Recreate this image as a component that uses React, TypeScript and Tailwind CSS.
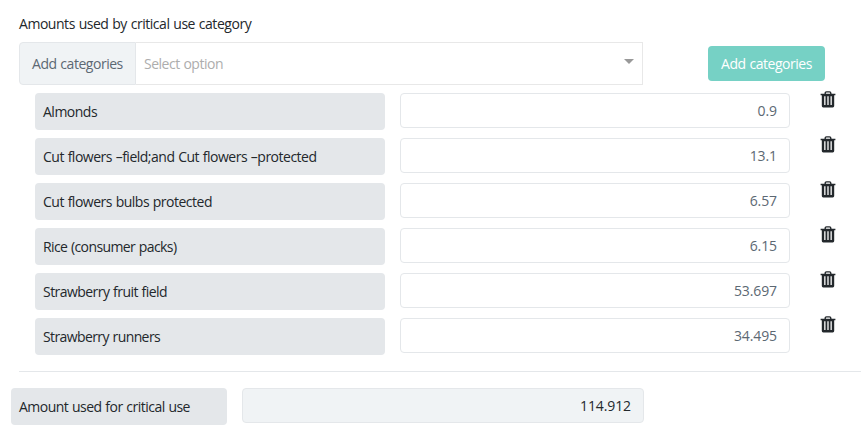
const rows: { name: string; amount: string; tracking: string }[] = [
  { name: "Almonds", amount: "0.9", tracking: "tracking-[-0.5px]" },
  { name: "Cut flowers –field;and Cut flowers –protected", amount: "13.1", tracking: "tracking-[-0.5px]" },
  { name: "Cut flowers bulbs protected", amount: "6.57", tracking: "tracking-[-0.5px]" },
  { name: "Rice (consumer packs)", amount: "6.15", tracking: "tracking-[-0.6px]" },
  { name: "Strawberry fruit field", amount: "53.697", tracking: "tracking-[-0.55px]" },
  { name: "Strawberry runners", amount: "34.495", tracking: "tracking-[-0.6px]" },
];

function TrashIcon() {
  return (
    <svg width="16" height="17" viewBox="0 0 16 17" fill="none" className="block">
      <path d="M5.2 3.2V2.2Q5.2 .9 6.5 .9H9.5Q10.8 .9 10.8 2.2V3.2" stroke="#23282c" strokeWidth="1.4" />
      <path
        fillRule="evenodd"
        d="M.6 2.8H15.4V4.3H14.2V15Q14.2 16.4 12.8 16.4H3.2Q1.8 16.4 1.8 15V4.3H.6ZM4.2 5.2V13.9H5.5V5.2ZM7.35 5.2V13.9H8.65V5.2ZM10.5 5.2V13.9H11.8V5.2Z"
        fill="#23282c"
      />
    </svg>
  );
}

export default function App() {
  return (
    <div className="h-[427px] w-[863px] overflow-hidden bg-white pt-[14px] font-['Open_Sans','Noto_Sans',sans-serif] text-[14px] leading-[21px] text-[#23282c] [word-spacing:0.6px]">
      <h1 className="ml-[19px] h-7 whitespace-nowrap leading-5 tracking-[-0.46px]">Amounts used by critical use category</h1>
      <div className="ml-[19px] flex h-[43px] items-center">
        <div className="flex h-full w-[624px]">
          <div className="flex w-[117px] items-center whitespace-nowrap rounded-l border border-[#e4e7ea] bg-[#f0f3f5] pl-3 tracking-[-0.47px] text-[#5c6873]">
            Add categories
          </div>
          <div className="flex flex-1 items-center justify-between border border-l-0 border-[#e8e8e8] px-2">
            <span className="tracking-[-0.49px] text-[#adadad]">Select option</span>
            <span className="mb-[5px] border-x-[5px] border-t-[5px] border-x-transparent border-t-[#999]" />
          </div>
        </div>
        <button className="ml-[65px] h-[35px] w-[117px] whitespace-nowrap rounded bg-[#76d1c5] tracking-[-0.47px] text-white [word-spacing:0.6px]">
          Add categories
        </button>
      </div>
      <div className="mt-2 flex flex-col gap-2 pl-[35px]">
        {rows.map((row) => (
          <div key={row.name} className="flex h-[37px] items-start">
            <div className="flex h-[37px] w-[350px] items-center rounded bg-[#e4e7ea] pl-2">
              <span className={row.tracking}>{row.name}</span>
            </div>
            <div className="ml-[15px] flex h-[35px] w-[390px] items-center justify-end rounded border border-[#e4e7ea] pr-3 text-[#5c6873]">
              <span className="tracking-[-0.1px]">{row.amount}</span>
            </div>
            <div className="-mt-[2px] ml-[30px]">
              <TrashIcon />
            </div>
          </div>
        ))}
      </div>
      <hr className="ml-[19px] mt-4 w-[842px] border-[#e4e7ea]" />
      <div className="mt-4 flex items-start pl-[11px]">
        <div className="flex h-[37px] w-[216px] items-center whitespace-nowrap rounded bg-[#e4e7ea] pl-2 tracking-[-0.52px]">
          Amount used for critical use
        </div>
        <div className="ml-[15px] flex h-[35px] w-[402px] items-center justify-end rounded border border-[#e4e7ea] bg-[#f0f3f5] pr-3">
          <span className="tracking-[-0.1px]">114.912</span>
        </div>
      </div>
    </div>
  );
}
